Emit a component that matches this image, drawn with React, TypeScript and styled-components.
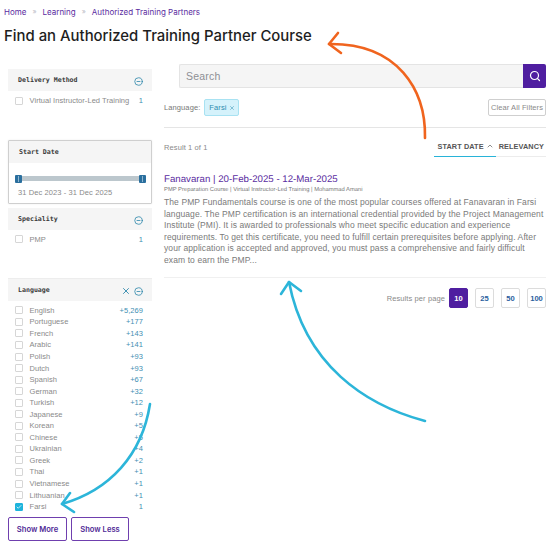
import React from 'react';
import styled, { createGlobalStyle } from 'styled-components';
import { Check, MinusCircle, Search, X, ChevronUp } from 'lucide-react';

const GlobalStyle = createGlobalStyle`
    html, body {
        margin: 0;
        padding: 0;
        background: #fff;
    }
    body {
        font-family: "Liberation Sans", Arial, sans-serif;
    }
`;

const Page = styled.div`
    position: relative;
    width: 556px;
    height: 558px;
    overflow: hidden;
    background: #fff;
`;

const Crumbs = styled.nav`
    display: flex;
    align-items: center;
    height: 11px;
    padding: 6px 0 0 4px;
    font-family: Inter, sans-serif;
    font-size: 8px;
    color: #5a2ca0;
`;

const CrumbSep = styled.span`
    margin: 0 6px;
    font-size: 7px;
    color: #b9b9c4;
`;

const Title = styled.h1`
    margin: 0;
    padding: 7px 0 0 4px;
    height: 31px;
    font-family: Inter, sans-serif;
    font-size: 14.9px;
    line-height: 24px;
    font-weight: 500;
    color: #1e1e1e;
    white-space: nowrap;
`;

const Columns = styled.div`
    display: flex;
    padding: 14px 10px 0 8px;
    gap: 12px;
`;

const Sidebar = styled.aside`
    flex: none;
    width: 144px;
`;

const Main = styled.main`
    flex: 1;
    min-width: 0;
    margin-top: -5px;
`;

const FilterHead = styled.div`
    display: flex;
    align-items: center;
    justify-content: space-between;
    height: 22px;
    padding: 0 9px 0 10px;
    background: #f5f5f5;
    font-family: "DejaVu Sans Mono", monospace;
    font-size: 6.6px;
    font-weight: 700;
    color: #3a3a3a;
`;

const HeadIcons = styled.span`
    display: flex;
    align-items: center;
    gap: 3px;
    margin-top: 3px;
    color: #1f7fa6;
`;

const FilterBody = styled.div`
    padding-top: 4px;
`;

const OptionRow = styled.label`
    display: flex;
    align-items: center;
    height: 11.55px;
    padding: 0 9px 0 7px;
    font-size: 7.5px;
    letter-spacing: 0.05px;
    color: #8a8a8a;
`;

const Box = styled.span<{ $checked?: boolean }>`
    flex: none;
    display: flex;
    align-items: center;
    justify-content: center;
    width: 6px;
    height: 6px;
    margin-right: 6.5px;
    border: 1px solid ${(p) => (p.$checked ? '#1eb4dc' : '#d6d6d6')};
    border-radius: 1px;
    background: ${(p) => (p.$checked ? '#1eb4dc' : '#fff')};
    color: #fff;
`;

const OptionName = styled.span`
    flex: 1;
    white-space: nowrap;
`;

const OptionCount = styled.span`
    color: #3f8fb3;
    font-size: 7.5px;
`;

const DateCard = styled.div`
    margin-top: 33px;
    height: 62px;
    border: 1px solid #cfcfcf;
    border-radius: 1px;
    box-shadow: 0 0 2px rgba(0, 0, 0, 0.08);
`;

const DateBody = styled.div`
    padding: 13px 5px 0 6px;
`;

const Slider = styled.div`
    position: relative;
    height: 5px;
    background: #bcc7cd;
`;

const Handle = styled.span<{ $right?: boolean }>`
    position: absolute;
    top: -1px;
    ${(p) => (p.$right ? 'right: 0;' : 'left: 0;')}
    width: 7px;
    height: 8px;
    border-radius: 1px;
    background: #2a6f9e;
    &::after {
        content: '';
        position: absolute;
        left: 3px;
        top: 1px;
        width: 1px;
        height: 6px;
        background: #8fb6d0;
    }
`;

const DateText = styled.div`
    margin: 7px 0 0 3px;
    font-size: 7.5px;
    letter-spacing: 0.1px;
    color: #8a8a8a;
`;

const SpecialityPanel = styled.section`
    margin-top: 4px;
    height: 70px;
    border-bottom: 1px solid #ededed;
`;

const ButtonRow = styled.div`
    display: flex;
    gap: 4px;
    margin-top: 5px;
`;

const OutlineButton = styled.button<{ $width: number }>`
    width: ${(p) => p.$width}px;
    height: 24px;
    padding: 0;
    border: 1px solid #6f3fae;
    border-radius: 2px;
    background: #fff;
    font-family: Inter, sans-serif;
    font-size: 7.6px;
    font-weight: 600;
    color: #4f2a96;
`;

const SearchBar = styled.div`
    display: flex;
    height: 24px;
    margin-left: 15px;
`;

const SearchField = styled.div`
    flex: 1;
    display: flex;
    align-items: center;
    padding-left: 6px;
    border: 1px solid #e4e4e4;
    border-right: 0;
    border-radius: 2px 0 0 2px;
    background: #f5f5f5;
    font-size: 10.5px;
    letter-spacing: 0.2px;
    color: #8d8f94;
`;

const SearchButton = styled.button`
    flex: none;
    display: flex;
    align-items: center;
    justify-content: center;
    width: 23px;
    padding: 0;
    border: 0;
    border-radius: 0 2px 2px 0;
    background: #4f1ea0;
    color: #fff;
`;

const FilterBar = styled.div`
    display: flex;
    align-items: center;
    height: 39px;
    border-bottom: 1px solid #e5e5e5;
    font-size: 7.5px;
    letter-spacing: 0.1px;
    color: #777;
`;

const Chip = styled.span`
    display: inline-flex;
    align-items: center;
    gap: 2px;
    height: 15px;
    margin-left: 4px;
    padding: 0 3px 0 4px;
    border: 1px solid #a8e2f2;
    border-radius: 2px;
    background: #d5f2fb;
    color: #2d8db0;
`;

const ClearButton = styled.button`
    margin-left: auto;
    width: 58px;
    height: 17px;
    padding: 0;
    border: 1px solid #cfcfcf;
    border-radius: 2px;
    background: #fff;
    font-family: inherit;
    font-size: 7.5px;
    letter-spacing: 0.1px;
    color: #8a8a8a;
    white-space: nowrap;
`;

const SortBar = styled.div`
    display: flex;
    align-items: stretch;
    justify-content: space-between;
    height: 29px;
    font-size: 7.5px;
    letter-spacing: 0.1px;
    color: #8a8a8a;
`;

const ResultCount = styled.span`
    padding-top: 15px;
`;

const SortTabs = styled.div`
    display: flex;
    border-bottom: 1px solid #ececec;
`;

const SortTab = styled.span<{ $active?: boolean }>`
    display: flex;
    align-items: center;
    gap: 2px;
    padding: 8px 2px 0 3px;
    margin-bottom: -1px;
    font-size: 7.3px;
    font-weight: 700;
    letter-spacing: 0.1px;
    color: #555;
    border-bottom: 1px solid ${(p) => (p.$active ? '#28b3d8' : 'transparent')};
`;

const Result = styled.article`
    padding-top: 17px;
    height: 103px;
    border-bottom: 1px solid #f0f0f0;
`;

const ResultTitle = styled.a`
    display: block;
    font-size: 9.7px;
    line-height: 12px;
    color: #5a2ca0;
    text-rendering: geometricPrecision;
`;

const ResultMeta = styled.div`
    font-size: 5.82px;
    line-height: 8px;
    color: #777;
    white-space: nowrap;
    text-rendering: geometricPrecision;
`;

const ResultText = styled.p`
    margin: 3px 0 0;
    font-size: 8.5px;
    line-height: 11.6px;
    letter-spacing: 0.1px;
    color: #7a7a7a;
    white-space: nowrap;
`;

const PerPage = styled.div`
    display: flex;
    align-items: center;
    justify-content: flex-end;
    gap: 4px;
    margin-top: 10px;
    font-size: 7.5px;
    letter-spacing: 0.1px;
    color: #8a8a8a;
`;

const PageGroup = styled.div`
    display: flex;
    gap: 7px;
`;

const PageButton = styled.button<{ $active?: boolean }>`
    width: 19px;
    height: 20px;
    padding: 0;
    border: 1px solid ${(p) => (p.$active ? '#4f1ea0' : '#dcdcdc')};
    border-radius: 2px;
    background: ${(p) => (p.$active ? '#4f1ea0' : '#fff')};
    font-family: inherit;
    font-size: 7.6px;
    font-weight: 700;
    color: ${(p) => (p.$active ? '#fff' : '#2a5f9e')};
`;

const Overlay = styled.svg`
    position: absolute;
    top: 0;
    left: 0;
    pointer-events: none;
`;

const languages: [string, string][] = [
    ['English', '+5,269'],
    ['Portuguese', '+177'],
    ['French', '+143'],
    ['Arabic', '+141'],
    ['Polish', '+93'],
    ['Dutch', '+93'],
    ['Spanish', '+67'],
    ['German', '+32'],
    ['Turkish', '+12'],
    ['Japanese', '+9'],
    ['Korean', '+5'],
    ['Chinese', '+5'],
    ['Ukrainian', '+4'],
    ['Greek', '+2'],
    ['Thai', '+1'],
    ['Vietnamese', '+1'],
    ['Lithuanian', '+1'],
];

const description = [
    'The PMP Fundamentals course is one of the most popular courses offered at Fanavaran in Farsi',
    'language. The PMP certification is an international credential provided by the Project Management',
    'Institute (PMI). It is awarded to professionals who meet specific education and experience',
    'requirements. To get this certificate, you need to fulfill certain prerequisites before applying. After',
    'your application is accepted and approved, you must pass a comprehensive and fairly difficult',
    'exam to earn the PMP...',
];

const Option = ({ name, count, checked }: { name: string; count: string; checked?: boolean }) => (
    <OptionRow>
        <Box $checked={checked}>{checked && <Check size={6} strokeWidth={3} />}</Box>
        <OptionName>{name}</OptionName>
        <OptionCount>{count}</OptionCount>
    </OptionRow>
);

const App = () => {
    return (
        <Page>
            <GlobalStyle />
            <Crumbs>
                Home<CrumbSep>»</CrumbSep>Learning<CrumbSep>»</CrumbSep>Authorized Training Partners
            </Crumbs>
            <Title>Find an Authorized Training Partner Course</Title>
            <Columns>
                <Sidebar>
                    <section>
                        <FilterHead>
                            Delivery Method
                            <HeadIcons><MinusCircle size={9} /></HeadIcons>
                        </FilterHead>
                        <FilterBody>
                            <Option name="Virtual Instructor-Led Training" count="1" />
                        </FilterBody>
                    </section>
                    <DateCard>
                        <FilterHead>Start Date</FilterHead>
                        <DateBody>
                            <Slider>
                                <Handle />
                                <Handle $right />
                            </Slider>
                            <DateText>31 Dec 2023 - 31 Dec 2025</DateText>
                        </DateBody>
                    </DateCard>
                    <SpecialityPanel>
                        <FilterHead>
                            Speciality
                            <HeadIcons><MinusCircle size={9} /></HeadIcons>
                        </FilterHead>
                        <FilterBody>
                            <Option name="PMP" count="1" />
                        </FilterBody>
                    </SpecialityPanel>
                    <section>
                        <FilterHead>
                            Language
                            <HeadIcons>
                                <X size={10} />
                                <MinusCircle size={9} />
                            </HeadIcons>
                        </FilterHead>
                        <FilterBody>
                            {languages.map(([name, count]) => (
                                <Option key={name} name={name} count={count} />
                            ))}
                            <Option name="Farsi" count="1" checked />
                        </FilterBody>
                    </section>
                    <ButtonRow>
                        <OutlineButton $width={59}>Show More</OutlineButton>
                        <OutlineButton $width={58}>Show Less</OutlineButton>
                    </ButtonRow>
                </Sidebar>
                <Main>
                    <SearchBar>
                        <SearchField>Search</SearchField>
                        <SearchButton><Search size={12} strokeWidth={2.4} /></SearchButton>
                    </SearchBar>
                    <FilterBar>
                        Language:
                        <Chip>Farsi <X size={6} /></Chip>
                        <ClearButton>Clear All Filters</ClearButton>
                    </FilterBar>
                    <SortBar>
                        <ResultCount>Result 1 of 1</ResultCount>
                        <SortTabs>
                            <SortTab $active>START DATE <ChevronUp size={8} /></SortTab>
                            <SortTab>RELEVANCY</SortTab>
                        </SortTabs>
                    </SortBar>
                    <Result>
                        <ResultTitle>Fanavaran | 20-Feb-2025 - 12-Mar-2025</ResultTitle>
                        <ResultMeta>PMP Preparation Course | Virtual Instructor-Led Training | Mohammad Amani</ResultMeta>
                        <ResultText>
                            {description.map((line) => (
                                <React.Fragment key={line}>{line}<br /></React.Fragment>
                            ))}
                        </ResultText>
                    </Result>
                    <PerPage>
                        Results per page
                        <PageGroup>
                            <PageButton $active>10</PageButton>
                            <PageButton>25</PageButton>
                            <PageButton>50</PageButton>
                            <PageButton>100</PageButton>
                        </PageGroup>
                    </PerPage>
                </Main>
            </Columns>
            <Overlay width="556" height="558" viewBox="0 0 556 558" fill="none" strokeLinecap="round" strokeLinejoin="round">
                <g stroke="#f0641e" strokeWidth="2.6">
                    <path d="M425 138C426 90 398 43 329 44" />
                    <path d="M338 33L329 44L341 53" />
                </g>
                <g stroke="#2cb5d9" strokeWidth="2.6">
                    <path d="M425 421C365 405 305 365 289 282" />
                    <path d="M281 294L289 282L301 291" />
                    <path d="M150 404C142 455 110 490 62 504" />
                    <path d="M70 493L62 504L74 512" />
                </g>
            </Overlay>
        </Page>
    );
};

export default App;
